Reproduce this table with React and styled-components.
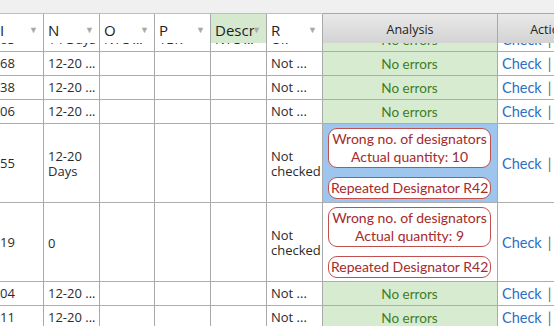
import React, { useLayoutEffect, useRef } from 'react'
import styled, { createGlobalStyle, css } from 'styled-components'

const GlobalStyle = createGlobalStyle`
    html, body { margin: 0; padding: 0; background: #fff; }
    body { font-family: "Open Sans", "Noto Sans", sans-serif; }
`;

const COLS = '44px 56px 55px 56px 56px 56px 175px 108px';

const Frame = styled.div`
    width: 554px;
    height: 326px;
    overflow: hidden;
    display: flex;
    flex-direction: column;
    background: #fff;
`;

const TopBar = styled.div`
    height: 13px;
    flex-shrink: 0;
    background: #f0f0f0;
    border-bottom: 1px solid #bdbdbd;
`;

const HeaderRow = styled.div`
    display: grid;
    grid-template-columns: ${COLS};
    height: 29px;
    flex-shrink: 0;
`;

const HeaderCell = styled.div`
    position: relative;
    box-sizing: border-box;
    border-right: 1px solid #a9a9a9;
    display: flex;
    align-items: center;
    padding: 3px 12px 0 ${p => p.$indent ?? 4}px;
    font-size: 15px;
    color: #222;
    white-space: nowrap;
    overflow: hidden;
    background: #fff;

    ${p => p.$tone === 'green' && css`
        background: #d5e9cf;
    `}
    ${p => p.$tone === 'grey' && css`
        justify-content: center;
        padding: 2px 0 0;
        font-size: 12.5px;
        background: linear-gradient(#e9e9e9, #d3d3d3);
        border-top: 1px solid #a8a8a8;
        margin-top: -1px;
    `}
`;

const HeaderLabel = styled.span`
    overflow: hidden;
    min-width: 0;
`;

const FilterArrow = styled.span`
    position: absolute;
    right: 5px;
    top: 9px;
    font-size: 9px;
    color: #a8a8a8;
`;

const Body = styled.div`
    flex: 1;
    overflow: hidden;
`;

const Row = styled.div`
    display: grid;
    grid-template-columns: ${COLS};
    height: ${p => p.$tall ? 79 : 24}px;
    box-sizing: border-box;
    border-bottom: 1px solid #adadad;
`;

const Cell = styled.div`
    box-sizing: border-box;
    border-right: 1px solid #a9a9a9;
    display: flex;
    align-items: center;
    padding: ${p => p.$wrap ? '2px' : '0'} 3px 0 ${p => p.$indent ?? 4}px;
    font-size: 13px;
    line-height: 15px;
    color: #2b2b2b;
    overflow: hidden;
    white-space: ${p => p.$wrap ? 'normal' : 'nowrap'};
`;

const AnalysisCell = styled.div`
    box-sizing: border-box;
    border-right: 1px solid #a9a9a9;
    display: flex;
    flex-direction: column;
    align-items: stretch;
    justify-content: center;
    gap: 9px;
    padding: 0 6px 0 5px;
    font-family: Lato, "Open Sans", sans-serif;
    background: ${p => p.$state === 'ok' ? '#d7ebd0' : p.$state === 'selected' ? '#9ec5ee' : '#fff'};
    color: #3e7d22;
    font-size: 13.5px;
    text-align: center;
    white-space: nowrap;
`;

const ErrorTag = styled.div`
    background: #fff;
    border: 1px solid #c0504d;
    border-radius: 9px;
    color: #a62a2a;
    font-size: 14px;
    line-height: 18px;
    padding: 1px 2px;
`;

const ActionCell = styled.div`
    display: flex;
    align-items: center;
    padding-left: 4px;
    font-family: Lato, "Open Sans", sans-serif;
    font-size: 14.5px;
    white-space: nowrap;
`;

const CheckLink = styled.span`
    color: #2d6ec4;
`;

const Bar = styled.span`
    color: #6a6a6a;
    margin-left: 6px;
`;

const rows = [
    { id: '65', n: '14 Days', o: 'NTC ...', p: 'TBK', d: 'NTC ...', r: 'Ok' },
    { id: '68', n: '12-20 ...', r: 'Not ...' },
    { id: '38', n: '12-20 ...', r: 'Not ...' },
    { id: '06', n: '12-20 ...', r: 'Not ...' },
    { id: '55', n: '12-20 Days', r: 'Not checked', tall: true, selected: true,
      errors: [['Wrong no. of designators', 'Actual quantity: 10'], ['Repeated Designator R42']] },
    { id: '19', n: '0', r: 'Not checked', tall: true,
      errors: [['Wrong no. of designators', 'Actual quantity: 9'], ['Repeated Designator R42']] },
    { id: '04', n: '12-20 ...', r: 'Not ...' },
    { id: '11', n: '12-20 ...', r: 'Not ...' },
    { id: '27', n: '12-20 ...', r: 'Not ...' },
];

const headers = [
    { label: 'I', indent: 0 },
    { label: 'N' },
    { label: 'O' },
    { label: 'P' },
    { label: 'Description', tone: 'green' },
    { label: 'R' },
];

function App() {
    const bodyRef = useRef(null);

    useLayoutEffect(() => {
        if (bodyRef.current) bodyRef.current.scrollTop = 15;
    }, []);

    return (<>
        <GlobalStyle />
        <Frame>
            <TopBar />
            <HeaderRow>
                {headers.map(h => (
                    <HeaderCell key={h.label} $tone={h.tone} $indent={h.indent}>
                        <HeaderLabel>{h.label}</HeaderLabel>
                        <FilterArrow>▼</FilterArrow>
                    </HeaderCell>
                ))}
                <HeaderCell $tone="grey">Analysis</HeaderCell>
                <HeaderCell $tone="grey">Actions</HeaderCell>
            </HeaderRow>
            <Body ref={bodyRef}>
                {rows.map((row, i) => (
                    <Row key={i} $tall={row.tall}>
                        <Cell $indent={0}>{row.id}</Cell>
                        <Cell $wrap={row.tall}>{row.n}</Cell>
                        <Cell>{row.o}</Cell>
                        <Cell>{row.p}</Cell>
                        <Cell>{row.d}</Cell>
                        <Cell $wrap={row.tall}>{row.r}</Cell>
                        {row.errors ? (
                            <AnalysisCell $state={row.selected ? 'selected' : 'plain'}>
                                {row.errors.map((lines, j) => (
                                    <ErrorTag key={j}>
                                        {lines.map(l => <div key={l}>{l}</div>)}
                                    </ErrorTag>
                                ))}
                            </AnalysisCell>
                        ) : (
                            <AnalysisCell $state="ok">No errors</AnalysisCell>
                        )}
                        <ActionCell>
                            <CheckLink>Check</CheckLink>
                            <Bar>|</Bar>
                        </ActionCell>
                    </Row>
                ))}
            </Body>
        </Frame>
    </>)
}

export default App
